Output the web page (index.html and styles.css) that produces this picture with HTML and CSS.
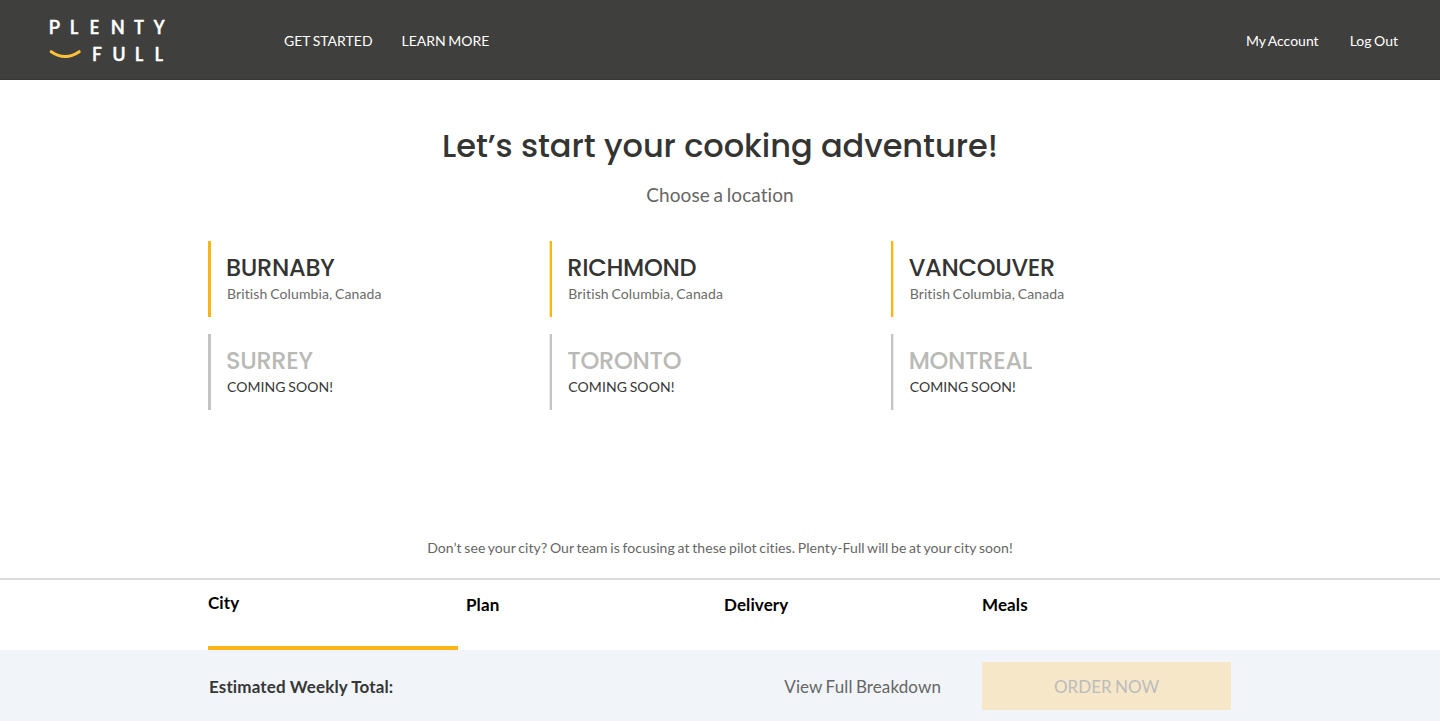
FILE: index.html
```html
<!DOCTYPE html>
<html lang="en">
<head>
<meta charset="utf-8">
<title>Plenty-Full</title>
<link rel="stylesheet" href="styles.css">
</head>
<body>
<header class="site-header">
  <a class="logo" aria-label="Plenty Full">
    <svg width="130" height="64" viewBox="0 -8 130 64">
      <g class="logo-text">
        <text y="17.6" x="0.8 21.8 41.5 62.8 85.4 105.2">PLENTY</text>
        <text y="44.6" x="44.1 64.2 86.8 106.5">FULL</text>
      </g>
      <path class="logo-smile" d="M3.2 35.7Q17.2 45.3 31.2 35.7"/>
    </svg>
  </a>
  <nav class="main-nav"><a>GET STARTED</a><a>LEARN MORE</a></nav>
  <nav class="account-nav"><a>My Account</a><a>Log Out</a></nav>
</header>
<main class="content">
  <h1 class="title">Let’s start your cooking adventure!</h1>
  <p class="subtitle">Choose a location</p>
  <section class="cities">
    <article class="city"><h2>BURNABY</h2><p>British Columbia, Canada</p></article>
    <article class="city"><h2>RICHMOND</h2><p>British Columbia, Canada</p></article>
    <article class="city"><h2>VANCOUVER</h2><p>British Columbia, Canada</p></article>
    <article class="city soon"><h2>SURREY</h2><p>COMING SOON!</p></article>
    <article class="city soon"><h2>TORONTO</h2><p>COMING SOON!</p></article>
    <article class="city soon"><h2>MONTREAL</h2><p>COMING SOON!</p></article>
  </section>
  <p class="note">Don’t see your city? Our team is focusing at these pilot cities. Plenty-Full will be at your city soon!</p>
</main>
<div class="steps">
  <div class="steps-inner">
    <a class="step active">City</a><a class="step">Plan</a><a class="step">Delivery</a><a class="step">Meals</a>
  </div>
</div>
<footer class="order-bar">
  <strong class="total">Estimated Weekly Total:</strong>
  <a class="breakdown">View Full Breakdown</a>
  <button class="order" disabled>ORDER NOW</button>
</footer>
</body>
</html>
```
FILE: styles.css
```css
* { box-sizing: border-box; }
body {
  margin: 0;
  height: 721px;
  overflow: hidden;
  display: flex;
  flex-direction: column;
  background: #fff;
  color: #373736;
  font-family: Lato, sans-serif;
  font-variant-ligatures: none;
}
h1, h2, p { margin: 0; }

.site-header {
  flex: none;
  height: 80px;
  padding: 0 42px 0 48px;
  display: flex;
  align-items: center;
  background: #3f3f3d;
  border-bottom: 1px solid #383836;
  color: #fff;
  font-size: 14px;
  line-height: 20px;
  word-spacing: -1px;
}
.logo { display: flex; width: 236px; }
.logo svg { overflow: visible; }
.logo-text {
  fill: #fff;
  stroke: #fff;
  stroke-width: 0.3;
  stroke-linejoin: round;
  font-family: Poppins, Lato, sans-serif;
  font-size: 19.5px;
  font-weight: 500;
}
.logo-smile {
  fill: none;
  stroke: #fdc23a;
  stroke-width: 3;
  stroke-linecap: round;
}
.main-nav { display: flex; gap: 29px; padding-top: 3px; }
.account-nav { display: flex; gap: 31px; margin-left: auto; padding-top: 3px; }

.content {
  flex: 1;
  display: flex;
  flex-direction: column;
  align-items: center;
  padding-top: 42px;
}
.title {
  font: 500 32px/48px Poppins, Inter, sans-serif;
  letter-spacing: -0.03px;
  color: #343433;
}
.subtitle {
  margin-top: 10px;
  font-size: 19px;
  line-height: 30px;
  letter-spacing: 0.06px;
  word-spacing: -1.2px;
  color: #666665;
}
.cities {
  width: 1024px;
  margin-top: 31px;
  display: grid;
  grid-template-columns: repeat(3, 1fr);
  row-gap: 17px;
}
.city {
  --bar: #fdb515;
  --bar-soft: #fee6b0;
  height: 76px;
  padding: 12px 0 0 18px;
  background: linear-gradient(var(--bar), var(--bar)) left / 3px 100% no-repeat;
}
.city:nth-child(3n + 2) {
  background-image: linear-gradient(90deg, var(--bar-soft) 1px, var(--bar) 1px);
}
.city:nth-child(3n) {
  background-image: linear-gradient(90deg, var(--bar) 2px, var(--bar-soft) 2px);
}
.city h2 {
  font: 500 24px/30px Poppins, Inter, sans-serif;
  letter-spacing: -0.3px;
  color: #343433;
}
.city p {
  margin: 1px 0 0 1px;
  font-size: 14px;
  line-height: 20px;
  letter-spacing: 0.12px;
  word-spacing: -1px;
  color: #6b6b6a;
}
.city.soon { --bar: #c4c4c4; --bar-soft: #ececec; }
.soon h2 { color: #b9b9b6; }
.city.soon p { letter-spacing: 0.08px; color: #373736; }
.note {
  margin: auto 0 20px;
  font-size: 14px;
  line-height: 20px;
  letter-spacing: 0.08px;
  word-spacing: -1px;
  color: #666665;
}

.steps { flex: none; height: 72px; border-top: 2px solid #dadada; }
.steps-inner {
  width: 1024px;
  height: 70px;
  margin: 0 auto;
  display: grid;
  grid-template-columns: repeat(4, 250px);
  column-gap: 8px;
}
.step {
  padding-top: 14px;
  font-size: 17px;
  line-height: 22px;
  font-weight: 700;
  letter-spacing: 0.1px;
  color: #000;
}
.active { padding-top: 12px; border-bottom: 4px solid #fdb515; }

.order-bar {
  flex: none;
  height: 71px;
  padding: 0 209px;
  display: flex;
  align-items: center;
  background: #f1f5fa;
  font-size: 17px;
}
.total { margin-top: 1px; letter-spacing: 0.13px; }
.breakdown {
  margin: 1px 41px 0 auto;
  letter-spacing: 0.1px;
  word-spacing: -1px;
  color: #666665;
}
.order {
  width: 249px;
  height: 48px;
  padding: 1px 0 0;
  border: 0;
  background: #f6e7c8;
  color: #bcbcbd;
  font: 17px Lato, sans-serif;
  word-spacing: -1px;
}
```
